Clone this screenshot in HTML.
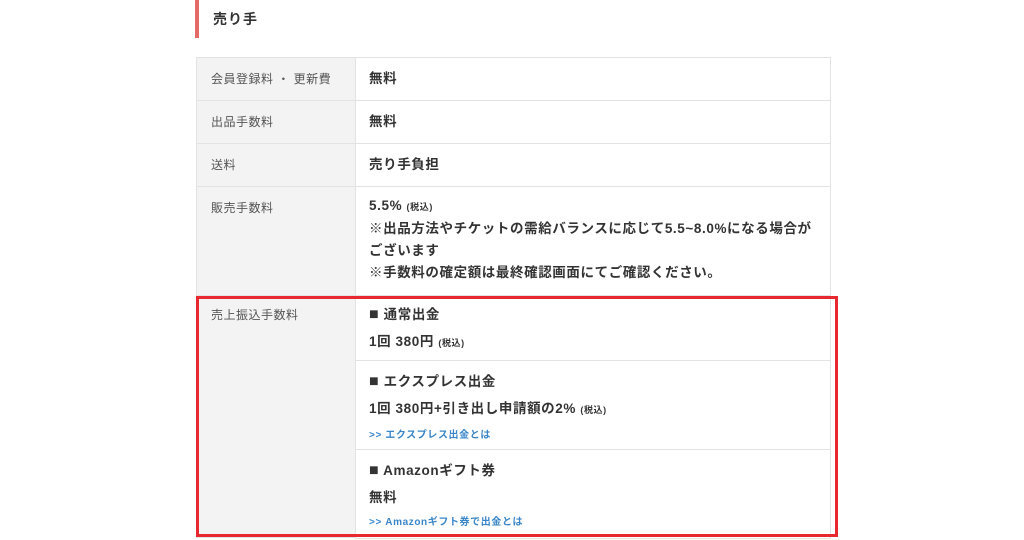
<!DOCTYPE html>
<html><head><meta charset="utf-8"><style>
*{margin:0;padding:0;box-sizing:border-box}
body{width:1024px;height:538px;background:#fff;position:relative;overflow:hidden;font-family:"Liberation Sans","Noto Sans CJK JP",sans-serif;color:#333}
.a{position:absolute;white-space:nowrap}
.bar{left:195px;top:0;width:4px;height:38px;background:#e46a6a}
.h{left:213px;top:9px;font-size:14px;font-weight:bold;color:#333;letter-spacing:1px}
.lab{position:absolute;left:196px;width:160px;background:#f3f3f3;border:1px solid #e3e3e3;font-size:12px;color:#555;padding-left:14px;letter-spacing:.5px}
.val{position:absolute;left:355px;width:476px;background:#fff;border:1px solid #e3e3e3;font-size:13.5px;font-weight:bold;color:#333;padding-left:13px;letter-spacing:.6px}
.s{font-size:9px;font-weight:bold}
.lk{font-size:10px;color:#3a86c8;font-weight:bold}
.sq{font-size:16px}
.red{position:absolute;left:196px;top:296px;width:642px;height:241px;border:3px solid #e8282e}
</style></head><body>
<div class="a bar"></div>
<div class="a h">売り手</div>

<div class="lab" style="top:57px;height:44px;padding-top:12px">会員登録料 ・ 更新費</div>
<div class="val" style="top:57px;height:44px;padding-top:9px">無料</div>
<div class="lab" style="top:100px;height:44px;padding-top:12px">出品手数料</div>
<div class="val" style="top:100px;height:44px;padding-top:9px">無料</div>
<div class="lab" style="top:143px;height:44px;padding-top:12px">送料</div>
<div class="val" style="top:143px;height:44px;padding-top:9px">売り手負担</div>
<div class="lab" style="top:186px;height:110px;padding-top:12px">販売手数料</div>
<div class="val" style="top:186px;height:110px;padding-top:8px;line-height:22px">5.5% <span class="s">(税込)</span><br>※出品方法やチケットの需給バランスに応じて5.5~8.0%になる場合が<br>ございます<br>※手数料の確定額は最終確認画面にてご確認ください。</div>

<div class="lab" style="top:295px;height:243px;padding-top:10px">売上振込手数料</div>
<div class="val" style="top:295px;height:66px;padding-top:5px;line-height:27px"><span class="sq">■</span> 通常出金<br>1回 380円 <span class="s">(税込)</span></div>
<div class="val" style="top:360px;height:90px;padding-top:7px;line-height:27px"><span class="sq">■</span> エクスプレス出金<br>1回 380円+引き出し申請額の2% <span class="s">(税込)</span><br><span class="lk" style="position:relative;top:-4px">&gt;&gt; エクスプレス出金とは</span></div>
<div class="val" style="top:449px;height:90px;padding-top:7px;line-height:27px"><span class="sq">■</span> Amazonギフト券<br>無料<br><span class="lk" style="position:relative;top:-4px">&gt;&gt; Amazonギフト券で出金とは</span></div>
<div class="red"></div>
</body></html>
